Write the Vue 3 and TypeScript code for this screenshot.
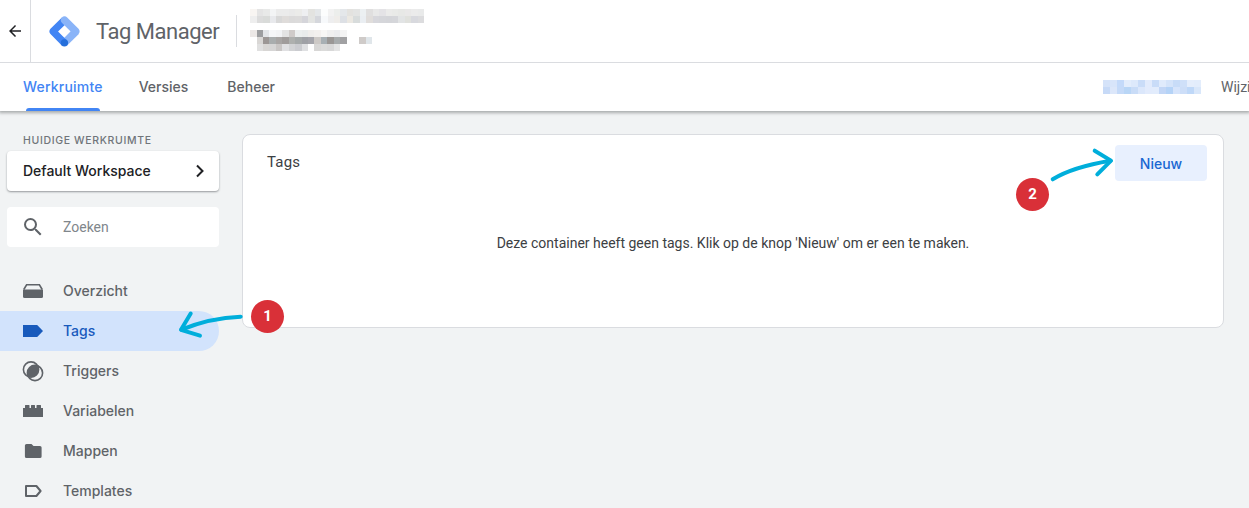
<script setup lang="ts">
const navItems = [
  { label: 'Overzicht', icon: 'overview', active: false },
  { label: 'Tags', icon: 'tag', active: true },
  { label: 'Triggers', icon: 'trigger', active: false },
  { label: 'Variabelen', icon: 'variable', active: false },
  { label: 'Mappen', icon: 'folder', active: false },
  { label: 'Templates', icon: 'template', active: false },
]
const tabs = [
  { label: 'Werkruimte', active: true },
  { label: 'Versies', active: false },
  { label: 'Beheer', active: false },
]
const blurTop = ('f8f5f2 e4e4e4 e8e9e8 f3f4f5 ebebeb ebebeb e9e9e9 ebebe9 eeeff1 e3e3e0 e4e7e9 fcfdfd f2f2f2 eceeec e4e7ea e3e2df e3e4e3 ecf0f2 e0dfdf e8e8e8 e4e3e6 ebebea e9eae8 e7e8e6 e9e8e8 ebebeb e9eaea ' +
  'eeeeee dcdcdc d9dbd9 e8e9ec d8d8d8 dfdcda dbdada dcdbdb d5d5da e3e4e2 d5d7dc f7f9fb eeeeef efedea dde0e5 ebe8e2 d8dcdc eaeef2 e0dddb d7d7dc d5d6da d4d5d9 d5d6da e2e4e5 e0e1dd d8d9de dcdcde').split(' ')
const blurBottom = ('ece8e6 9d9ea0 e3e5e8 f5f6f8 f2f3f5 e3e3e3 cfcbc9 ecefef e9ecec f0eeec f3f0ee f8f7f5 f0f0f0 ecedef f4f4f4 ffffff ffffff ffffff ffffff ' +
  'ffffff d9d7d5 9c9795 a9adae a8a5a4 a09c9b aeb0ae a5a9a9 9fa1a6 a5a5ab cdc9c6 a8b0b4 9a9795 a7abac a1a1a3 ffffff ffffff cfcbc9 e0e6ea ' +
  'ffffff e0e0e0 d8d6d4 d6d5d5 c9c6c5 e0e0e2 d2d3d5 cbccd0 dfe0e2 ffffff d8d7d6 dbdbda d8d8d8 e4e4e4 ffffff ffffff ffffff ffffff ffffff').split(' ')
const blurRight = ('d5e3f9 d8e5fa c4dafa e3edfc dde9fb c9dcf8 e2ebfc c9dcf8 e0ebfc d5e4fa c8dcf8 cfe0f9 e5eefc e3edfc ' +
  'c7daf7 dce7fa c5daf8 b9d6f6 c9dcf7 dbe7fb e2ebfc e2ecfc c2d6f6 b5d3f7 d6e4fb cddef8 bfd8f8 d9e7fa').split(' ')
</script>

<template>
  <div class="page">
    <header class="appbar">
      <div class="topbar">
        <button class="back" aria-label="Terug">
          <svg width="12" height="12" viewBox="0 0 16 16"><path d="M16 7H3.8l5.6-5.6L8 0 0 8l8 8 1.4-1.4L3.8 9H16z" fill="#202124" /></svg>
        </button>
        <svg class="logo" width="33" height="33" viewBox="0 0 192 192">
          <path fill="#8AB4F8" d="M111.31 176.79L80.76 147 146.37 80 178 112z" />
          <path fill="#4285F4" d="M111.44 45.08L81 14 14.44 79.93c-8.58 8.58-8.58 22.49 0 31.08L80 177l31-29-52.54-51.93 53-51z" />
          <path fill="#8AB4F8" d="M177.56 80L111.56 14c-8.59-8.59-22.52-8.59-31.11 0-8.59 8.59-8.59 22.52 0 31.11l66 66c8.59 8.59 22.52 8.59 31.11 0 8.59-8.59 8.59-22.52 0-31.11z" />
          <circle fill="#246FDB" cx="95.5" cy="162" r="21.5" />
        </svg>
        <span class="product">Tag Manager</span>
        <span class="divider"></span>
        <div class="account">
          <div class="blur blur-top">
            <i v-for="(c, i) in blurTop" :key="i" :style="{ background: '#' + c }"></i>
          </div>
          <div class="blur blur-bottom">
            <i v-for="(c, i) in blurBottom" :key="i" :style="{ background: '#' + c }"></i>
          </div>
        </div>
      </div>
      <nav class="tabs">
        <a v-for="t in tabs" :key="t.label" class="tab" :class="{ active: t.active }">{{ t.label }}</a>
        <div class="tabs-right">
          <div class="blur blur-right">
            <i v-for="(c, i) in blurRight" :key="i" :style="{ background: '#' + c }"></i>
          </div>
          <span class="changes">Wijzigingen</span>
        </div>
      </nav>
    </header>

    <div class="content">
      <aside class="sidebar">
        <div class="ws-label">HUIDIGE WERKRUIMTE</div>
        <div class="ws-card">
          <span class="lift">Default Workspace</span>
          <svg width="12" height="14" viewBox="0 0 12 14"><path d="M3 1.5L8.5 7 3 12.5" fill="none" stroke="#202124" stroke-width="2" /></svg>
        </div>
        <div class="search">
          <svg width="24" height="24" viewBox="0 0 24 24"><path fill="#5f6368" d="M15.5 14h-.79l-.28-.27A6.47 6.47 0 0 0 16 9.5 6.5 6.5 0 1 0 9.5 16c1.61 0 3.09-.59 4.23-1.57l.27.28v.79l5 4.99L20.49 19l-4.99-5zm-6 0C7.01 14 5 11.99 5 9.5S7.01 5 9.5 5 14 7.01 14 9.5 11.99 14 9.5 14z" /></svg>
          <span>Zoeken</span>
        </div>
        <ul class="nav">
          <li v-for="n in navItems" :key="n.label" class="nav-item" :class="{ active: n.active }">
            <svg width="24" height="24" viewBox="0 0 24 24" class="nav-icon">
              <template v-if="n.icon === 'overview'">
                <path d="M2.8 10.5 L5.6 5.8 H18.4 L21.2 10.5" fill="none" stroke="#5f6368" stroke-width="1.6" />
                <path d="M2 10.5 H22 V17.5 a1.5 1.5 0 0 1 -1.5 1.5 H3.5 a1.5 1.5 0 0 1 -1.5 -1.5z" fill="#5f6368" />
              </template>
              <path v-else-if="n.icon === 'tag'" d="M2 6 H16.2 L22 12 L16.2 18 H2z" fill="#185abc" />
              <template v-else-if="n.icon === 'trigger'">
                <clipPath id="trigger-clip"><circle cx="10" cy="10.5" r="7.6" /></clipPath>
                <circle cx="10" cy="10.5" r="7.6" fill="none" stroke="#5f6368" stroke-width="1.6" />
                <circle cx="14" cy="14" r="7.6" fill="none" stroke="#5f6368" stroke-width="1.6" />
                <circle cx="14" cy="14" r="7.6" fill="#5f6368" clip-path="url(#trigger-clip)" />
              </template>
              <path v-else-if="n.icon === 'variable'" d="M2 9 H4 V6.5 a.5 .5 0 0 1 .5 -.5 H8 a.5 .5 0 0 1 .5 .5 V9 H10 V6.5 a.5 .5 0 0 1 .5 -.5 H13.5 a.5 .5 0 0 1 .5 .5 V9 H15.5 V6.5 a.5 .5 0 0 1 .5 -.5 H19.5 a.5 .5 0 0 1 .5 .5 V9 H22 V18 H2z" fill="#5f6368" />
              <path v-else-if="n.icon === 'folder'" d="M5.5 5 H10.5 L12.5 7 H19 a1.6 1.6 0 0 1 1.6 1.6 V17.4 a1.6 1.6 0 0 1 -1.6 1.6 H5.5 a1.6 1.6 0 0 1 -1.6 -1.6 V6.6 A1.6 1.6 0 0 1 5.5 5z" fill="#5f6368" />
              <path v-else d="M5 7 H15.4 L19.6 12 L15.4 17 H5z" fill="none" stroke="#5f6368" stroke-width="2" stroke-linejoin="round" />
            </svg>
            <span class="lift">{{ n.label }}</span>
          </li>
        </ul>
      </aside>

      <main class="main">
        <section class="card">
          <div class="card-head">
            <h2>Tags</h2>
            <button class="new">Nieuw</button>
          </div>
          <p class="empty">Deze container heeft geen tags. Klik op de knop 'Nieuw' om er een te maken.</p>
        </section>
      </main>
    </div>

    <svg class="arrows" width="1249" height="508" viewBox="0 0 1249 508">
      <g fill="none" stroke="#00aedb" stroke-width="4" stroke-linecap="round" stroke-linejoin="round">
        <path d="M240.7 316.7 C220 317.5 200 322 181.5 329.6" />
        <path d="M190.7 313.5 L181 329.8 L200 335.6" />
        <path d="M1052.7 179.3 C1068 170 1088 164.5 1110.5 160.8" />
        <path d="M1094.7 150.7 L1111 160.6 L1097.3 174.3" />
      </g>
    </svg>
    <span class="badge badge-one">1</span>
    <span class="badge badge-two">2</span>
  </div>
</template>

<style>
html, body { margin: 0; background: #f1f3f4; overflow: hidden; }
</style>

<style scoped>
.page {
  position: relative;
  width: 1249px;
  height: 508px;
  overflow: hidden;
  background: #f1f3f4;
  font-family: Roboto, "Liberation Sans", sans-serif;
}
.appbar {
  position: relative;
  z-index: 1;
  background: #fff;
  box-shadow: 0 1px 3px 1px rgba(60, 64, 67, .4);
}
.topbar {
  height: 62px;
  display: flex;
  align-items: center;
  border-bottom: 1px solid #dadce0;
}
.back {
  width: 31px;
  height: 62px;
  flex: none;
  box-sizing: border-box;
  padding: 0;
  border: 0;
  border-right: 1px solid #dadce0;
  background: none;
  display: flex;
  align-items: center;
  justify-content: center;
}
.logo { margin-left: 17px; flex: none; }
.product {
  margin-left: 15px;
  font-size: 22px;
  color: #5f6368;
  letter-spacing: -.48px;
  white-space: nowrap;
}
.divider {
  width: 1px;
  height: 32px;
  margin-left: 17px;
  background: #dadce0;
}
.account {
  margin-left: 13px;
  align-self: flex-start;
  margin-top: 9px;
}
.blur { display: grid; flex: none; }
.blur i { display: block; }
.blur-top {
  width: 174px;
  grid-template-columns: repeat(27, 1fr);
  grid-auto-rows: 7px;
}
.blur-bottom {
  width: 122px;
  margin-top: 7px;
  grid-template-columns: repeat(19, 1fr);
  grid-auto-rows: 7px;
}
.blur-right {
  width: 98px;
  grid-template-columns: repeat(14, 1fr);
  grid-auto-rows: 7px;
}
.tabs {
  height: 48px;
  display: flex;
  align-items: center;
  padding-left: 23px;
  gap: 36px;
  font-family: Inter, Roboto, sans-serif;
  font-size: 14px;
  font-weight: 500;
}
.tab {
  position: relative;
  height: 48px;
  line-height: 48px;
  color: #5f6368;
}
.tab + .tab + .tab { margin-left: 3px; }
.tab.active { color: #4285f4; letter-spacing: .2px; }
.tab.active::after {
  content: "";
  position: absolute;
  left: 3px;
  right: 3px;
  bottom: 0;
  height: 3px;
  border-radius: 3px 3px 0 0;
  background: #4285f4;
}
.tabs-right {
  margin-left: auto;
  display: flex;
  align-items: center;
  gap: 20px;
  width: 146px;
  flex: none;
  overflow: hidden;
  white-space: nowrap;
}
.changes { font-family: Roboto, sans-serif; font-size: 14px; font-weight: 400; color: #5f6368; }
.content { display: flex; align-items: flex-start; }
.sidebar { width: 242px; flex: none; padding-top: 23px; }
.ws-label {
  padding-left: 23px;
  font-family: Inter, Roboto, sans-serif;
  font-size: 10.5px;
  line-height: 13px;
  font-weight: 500;
  letter-spacing: .65px;
  color: #70757a;
}
.ws-card, .search {
  box-sizing: border-box;
  width: 212px;
  height: 40px;
  margin-left: 7px;
  background: #fff;
  border-radius: 4px;
  display: flex;
  align-items: center;
}
.ws-card {
  margin-top: 4px;
  padding: 0 13px 0 16px;
  justify-content: space-between;
  font-family: Inter, Roboto, sans-serif;
  font-size: 14px;
  font-weight: 500;
  color: #202124;
  box-shadow: 0 1px 2px rgba(60, 64, 67, .5);
}
.lift { padding-bottom: 2px; }
.search {
  margin-top: 16px;
  padding-left: 14px;
  gap: 18px;
  font-size: 14px;
  color: #80868b;
}
.nav { list-style: none; margin: 24px 0 0; padding: 0; }
.nav-item {
  width: 219px;
  height: 40px;
  box-sizing: border-box;
  padding-left: 21px;
  display: flex;
  align-items: center;
  gap: 18px;
  font-family: Inter, Roboto, sans-serif;
  font-size: 14px;
  font-weight: 500;
  color: #5f6368;
  border-radius: 0 20px 20px 0;
}
.nav-item.active { background: #d2e3fc; color: #185abc; }
.nav-icon { flex: none; }
.main { flex: 1; padding: 23px 25px 0 0; min-width: 0; }
.card {
  box-sizing: border-box;
  height: 194px;
  background: #fff;
  border: 1px solid #dadce0;
  border-radius: 8px;
  padding: 10px 16px 0 24px;
}
.card-head { display: flex; justify-content: space-between; align-items: flex-start; }
.card-head h2 {
  margin: 7px 0 0;
  font-size: 15px;
  line-height: 20px;
  font-weight: 400;
  letter-spacing: .2px;
  color: #3c4043;
}
.new {
  width: 92px;
  height: 36px;
  padding: 0;
  border: 0;
  border-radius: 4px;
  background: #e8f0fe;
  color: #1967d2;
  font: 500 14px Inter, Roboto, sans-serif;
}
.empty {
  margin: 52px 0 0;
  padding-right: 8px;
  font-size: 14px;
  line-height: 20px;
  text-align: center;
  color: #3c4043;
}
.arrows { position: absolute; left: 0; top: 0; z-index: 2; pointer-events: none; }
.badge {
  position: absolute;
  z-index: 3;
  width: 33px;
  height: 33px;
  border-radius: 50%;
  background: #d93038;
  color: #fff;
  font-size: 15px;
  font-weight: 700;
  line-height: 33px;
  text-align: center;
}
.badge-one { left: 251px; top: 300px; }
.badge-two { left: 1016px; top: 178px; }
</style>
